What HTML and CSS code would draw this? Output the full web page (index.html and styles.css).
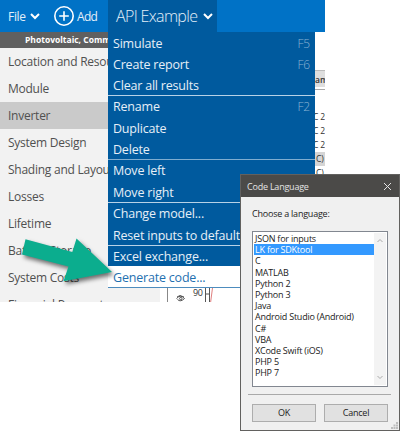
FILE: index.html
```html
<!DOCTYPE html>
<html lang="en">
<head>
<meta charset="utf-8">
<title>Code Language</title>
<link rel="stylesheet" href="styles.css">
</head>
<body>
<div class="app">
  <header class="topbar">
    <span class="file">File</span>
    <svg class="chev" width="10" height="8" viewBox="0 0 10 8"><path d="M1 2l4 4 4-4"/></svg>
    <svg class="plus" width="20" height="20" viewBox="0 0 20 20"><circle cx="10" cy="10" r="9.2"/><path d="M5.2 10h9.6M10 5.2v9.6"/></svg>
    <span class="add">Add</span>
    <div class="tab"><span class="tab-name">API Example</span><svg class="chev" width="10" height="8" viewBox="0 0 10 8"><path d="M1 2l4 4 4-4"/></svg></div>
  </header>
  <div class="body">
    <nav class="side">
      <div class="tech">Photovoltaic, Comm</div>
      <div class="nav-item">Location and Resou</div>
      <div class="nav-item">Module</div>
      <div class="nav-item current">Inverter</div>
      <div class="nav-item">System Design</div>
      <div class="nav-item">Shading and Layou</div>
      <div class="nav-item">Losses</div>
      <div class="nav-item">Lifetime</div>
      <div class="nav-item">Battery Storage</div>
      <div class="nav-item">System Costs</div>
      <div class="nav-item">Financial Parameters</div>
    </nav>
    <main class="pane">
      <div class="col">
        <div class="col-head">am</div>
        <div class="col-rule"></div>
        <div class="cell">C 2</div>
        <div class="cell">C 2</div>
        <div class="cell">C 2</div>
        <div class="cell on">C)</div>
        <div class="cell wide">C)</div>
      </div>
      <div class="chart">
        <svg class="eye" width="9" height="7" viewBox="0 0 9 7"><path d="M.5 3.5Q4.5-1 8.500 3.500Q4.500 7.500 1.500 4.500M1 2L4 .5L8 2"/><circle cx="4.800" cy="3.600" r="1.200"/></svg>
        <span class="ninety">90</span>
        <svg class="plot" width="10" height="15" viewBox="0 0 10 15"><path d="M1.500 0v15M5.500 0v15M1.500 6h4"/><path class="red" d="M8.500 0L6.500 15"/></svg>
      </div>
    </main>
  </div>
</div>

<div class="menu">
  <div class="item">Simulate<span class="key">F5</span></div>
  <div class="item">Create report<span class="key">F6</span></div>
  <div class="item">Clear all results</div>
  <div class="group item">Rename<span class="key">F2</span></div>
  <div class="item">Duplicate</div>
  <div class="item">Delete</div>
  <div class="group item soft">Move left</div>
  <div class="item">Move right</div>
  <div class="group item">Change model...</div>
  <div class="item">Reset inputs to default</div>
  <div class="group item last">Excel exchange...</div>
  <div class="item hover">Generate code...</div>
</div>

<svg class="arrow" width="110" height="64" viewBox="10 230 110 64"><polygon points="25.500,239.300 72.300,252 76.500,238.500 112,272 63.500,281.300 68.500,266.500 22,254.500"/></svg>

<section class="dialog">
  <div class="title"><span>Code Language</span><svg width="9" height="9" viewBox="0 0 9 9"><path d="M1 1l7 7M8 1l-7 7"/></svg></div>
  <div class="prompt">Choose a language:</div>
  <div class="list">
    <div class="options">
      <div>JSON for inputs</div>
      <div class="picked">LK for SDKtool</div>
      <div>C</div>
      <div>MATLAB</div>
      <div>Python 2</div>
      <div>Python 3</div>
      <div>Java</div>
      <div>Android Studio (Android)</div>
      <div>C#</div>
      <div>VBA</div>
      <div>XCode Swift (iOS)</div>
      <div>PHP 5</div>
      <div>PHP 7</div>
    </div>
    <div class="scroll">
      <svg width="6" height="5" viewBox="0 0 6 5"><path d="M.5 4L3 1.500 5.500 4"/></svg>
      <svg width="6" height="5" viewBox="0 0 6 5"><path d="M.5 1L3 3.500 5.500 1"/></svg>
    </div>
  </div>
  <div class="rule"></div>
  <div class="buttons"><div class="btn">OK</div><div class="btn">Cancel</div></div>
  <svg class="grip" width="7" height="7" viewBox="0 0 7 7"><path d="M5 0h2v2h-2zM5 2.500h2v2h-2zM5 5h2v2h-2zM2.500 2.500h2v2h-2zM2.500 5h2v2h-2zM0 5h2v2h-2z"/></svg>
</section>
</body>
</html>
```
FILE: styles.css
```css
* { box-sizing: border-box; }
body {
  margin: 0;
  width: 400px;
  height: 431px;
  overflow: hidden;
  position: relative;
  background: #fff;
  font-family: "Open Sans", "Noto Sans", sans-serif;
  white-space: nowrap;
}
svg { display: block; flex: none; }
.app { width: 325px; height: 302px; overflow: hidden; }
.topbar {
  display: flex;
  align-items: center;
  height: 32px;
  padding-left: 8px;
  background: #0072c6;
  color: #e3eff9;
  font-size: 12px;
}
.chev { fill: none; stroke: #fff; stroke-width: 2; }
.file { width: 22px; letter-spacing: -.3px; }
.plus { margin-left: 14px; fill: none; stroke: #fff; stroke-width: 1.6; }
.add { width: 34px; padding-left: 3px; letter-spacing: -.7px; }
.tab {
  display: flex;
  align-items: center;
  width: 109px;
  height: 32px;
  padding-left: 8px;
  background: #005a9e;
}
.tab-name { width: 87px; font-size: 16px; font-weight: 300; letter-spacing: -.65px; }
.body { display: flex; height: 270px; }
.side { flex: none; width: 160px; background: #f2f2f2; overflow: hidden; }
.tech {
  height: 16px;
  padding-left: 25px;
  background: #606060;
  color: #fff;
  font-size: 8.500px;
  font-weight: 700;
  line-height: 15px;
}
.nav-item {
  height: 27px;
  padding-left: 8px;
  color: #505050;
  font-size: 12px;
  line-height: 28px;
  letter-spacing: -.25px;
}
.current { background: #cacaca; }
.pane { flex: 1; min-width: 0; display: flex; flex-direction: column; }
.col { flex: none; height: 256px; padding: 38px 0 0 155px; font-size: 8.500px; color: #333; overflow: hidden; }
.col-head { height: 17px; background: #dedede; border-top: 1px solid #bbb; line-height: 17px; font-weight: 600; }
.col-rule { height: 3px; border-bottom: 1px solid #aaa; margin-bottom: 20px; }
.cell { height: 14px; line-height: 14px; text-indent: -2px; letter-spacing: -.2px; }
.cell.on { background: #d5d5d5; text-indent: 1px; }
.cell.wide { text-indent: 1px; }
.chart { display: flex; height: 14px; margin-left: 7px; padding-left: 8px; border-left: 1px solid #888; }
.chart svg { fill: none; stroke: #555; stroke-width: 1; }
.chart .eye { margin-top: 7px; }
.ninety { width: 11px; margin-left: 8px; font-size: 9px; letter-spacing: -.4px; line-height: 10px; color: #333; }
.chart .red { stroke: #e08080; }
.menu {
  position: absolute;
  left: 108px;
  top: 32px;
  width: 207px;
  background: #005a9e;
  color: #e6eff7;
  font-size: 12.500px;
}
.item { display: flex; justify-content: space-between; height: 21px; padding: 0 5px; line-height: 23px; letter-spacing: -.2px; }
.group { height: 22px; border-top: 1px solid #b8d2e7; line-height: 22px; }
.soft { border-color: #7fadd0; }
.last { height: 21px; }
.key { color: #8bb2d3; font-size: 12px; font-weight: 300; }
.hover { height: 22px; background: #fff; border-bottom: 1px solid #4d8cbe; color: #1f70b0; }
.arrow { position: absolute; left: 10px; top: 230px; fill: #0bad8e; filter: drop-shadow(2px 3px 2px rgba(0,0,0,.55)); }
.dialog {
  position: absolute;
  left: 240px;
  top: 174px;
  width: 160px;
  height: 257px;
  border: 1px solid #62615f;
  background: #f0f0f0;
  color: #222;
  font-size: 9px;
  letter-spacing: -.22px;
}
.title {
  display: flex;
  justify-content: space-between;
  align-items: center;
  height: 22px;
  padding: 0 7px 0 6px;
  background: #4b4a48;
  color: #e4e4e4;
}
.title svg { fill: none; stroke: #e4e4e4; stroke-width: 1; }
.prompt { height: 34px; padding: 11px 0 0 11px; line-height: 12px; }
.list { display: flex; width: 136px; height: 156px; margin-left: 11px; padding: 1px; border: 1px solid #828790; background: #fff; }
.options { flex: 1; }
.options div { height: 11.200px; padding-left: 1px; line-height: 11.200px; }
.options .picked { background: #3399ff; color: #fff; }
.scroll { display: flex; flex-direction: column; justify-content: space-between; align-items: center; width: 12px; padding: 5px 0; background: #f3f3f3; }
.scroll svg { fill: none; stroke: #aaa; }
.rule { height: 1px; margin: 7px 8px 9px 7px; background: #a9a9a9; }
.buttons { display: flex; gap: 8px; margin-left: 11px; }
.btn { width: 64px; height: 18px; border: 1px solid #adadad; background: #e1e1e1; line-height: 16px; text-align: center; }
.grip { position: absolute; right: 1px; bottom: 1px; fill: #bdbdbd; }
```
